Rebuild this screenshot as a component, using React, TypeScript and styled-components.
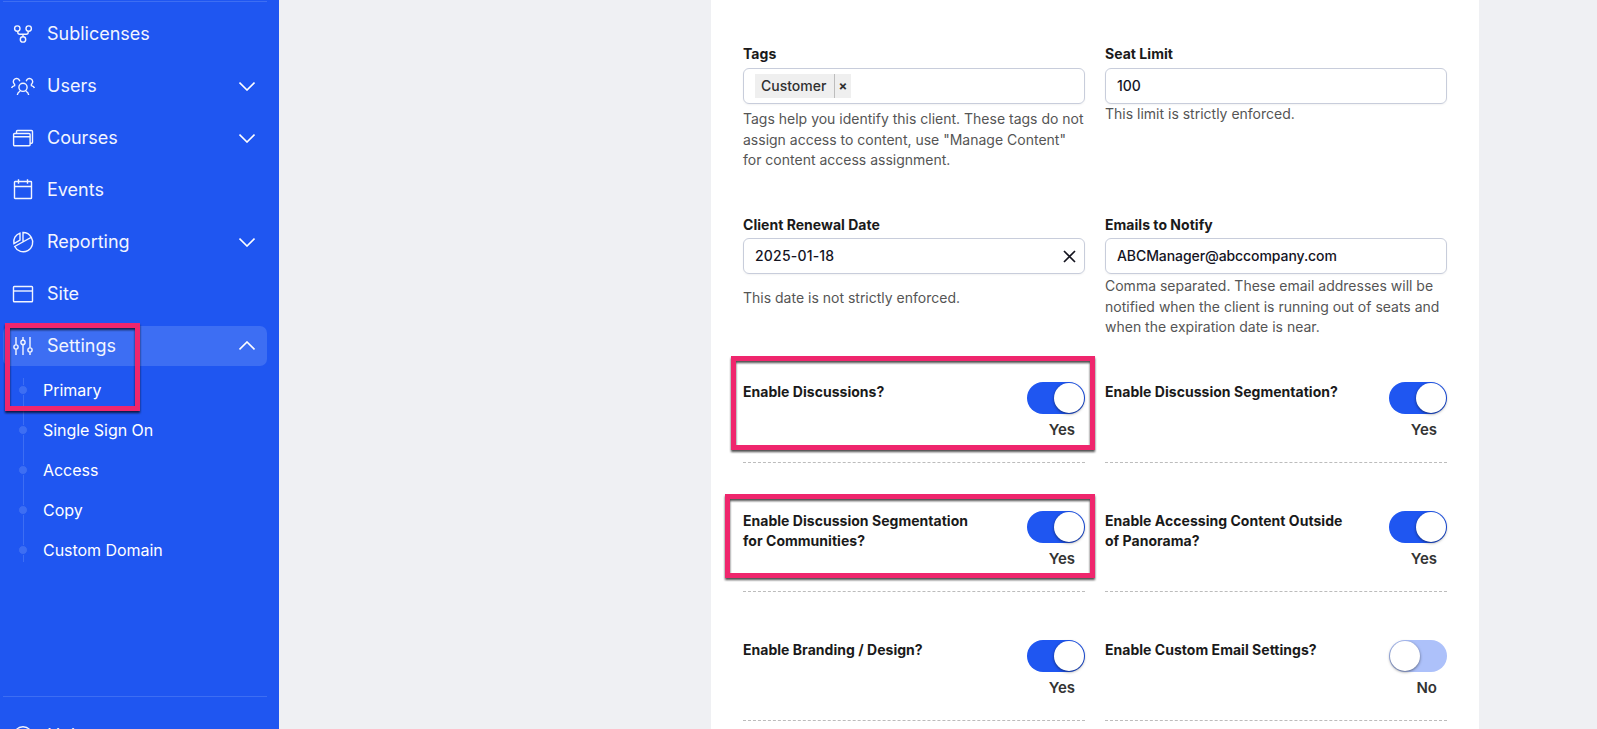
import * as React from 'react';
import styled, {createGlobalStyle, ThemeProvider} from 'styled-components';

const theme = {
  colors: {
    primary: '#1f56f1',
    primaryLight: '#3d6ef3',
    primaryOff: '#adc1fa',
    page: '#eff0f3',
    border: '#c8cddb',
    text: '#1a1a1a',
    help: '#555555',
    highlight: '#ef266d',
  },
};

const GlobalStyle = createGlobalStyle`
  * {
    box-sizing: border-box;
  }

  body {
    margin: 0;
    overflow: hidden;
    font-family: Inter, "Liberation Sans", sans-serif;
  }
`;

const Page = styled.div`
  display: flex;
  height: 729px;
  overflow: hidden;
  background: ${props => props.theme.colors.page};
`;

const Sidebar = styled.nav`
  width: 279px;
  flex: none;
  padding: 1px 12px 0 3px;
  overflow: hidden;
  background: ${props => props.theme.colors.primary};
`;

const Divider = styled.div`
  height: 1px;
  background: ${props => props.theme.colors.primaryLight};
`;

const NavList = styled.div`
  display: flex;
  flex-direction: column;
  gap: 12px;
  padding-top: 12px;
`;

const NavItem = styled.div<{$active?: boolean}>`
  position: relative;
  display: flex;
  align-items: center;
  height: 40px;
  padding: 0 12px 0 8px;
  border-radius: 7px;
  color: #f2f5ff;
  background: ${props => props.$active ? props.theme.colors.primaryLight : 'transparent'};
`;

const NavLabel = styled.span`
  flex: 1;
  margin-left: 12px;
  font-size: 18px;
  line-height: 24px;
`;

const Icon = styled.svg`
  flex: none;
  width: 24px;
  height: 24px;
  fill: none;
  stroke: currentColor;
  stroke-width: 1.4;
`;

const ChevronIcon = styled.svg<{$open?: boolean}>`
  width: 16px;
  height: 9px;
  margin-top: ${props => props.$open ? -1 : 1}px;
  fill: none;
  stroke: #ffffff;
  stroke-width: 1.6;
  transform: ${props => props.$open ? 'rotate(180deg)' : 'none'};
`;

const SubList = styled.div`
  position: relative;
  display: flex;
  flex-direction: column;
  margin: 4px 0 126px;
  color: #ffffff;

  &::before {
    content: '';
    position: absolute;
    top: 8px;
    bottom: 8px;
    left: 20px;
    width: 1px;
    background: ${props => props.theme.colors.primaryLight};
  }
`;

const SubItem = styled.div`
  display: flex;
  align-items: center;
  height: 40px;
  padding-left: 15px;
  font-size: 16px;
  letter-spacing: -0.04px;
`;

const Dot = styled.span`
  position: relative;
  width: 10px;
  height: 10px;
  margin-right: 15px;
  border: 1px solid ${props => props.theme.colors.primary};
  border-radius: 50%;
  background: ${props => props.theme.colors.primaryLight};
`;

const HelpItem = styled(NavItem)`
  margin-top: 19px;
`;

/* Annotation frame drawn over the area it calls out */
const Highlight = styled.div<{$top: number; $left: number; $width: number; $height: number}>`
  position: absolute;
  z-index: 1;
  top: ${props => props.$top}px;
  left: ${props => props.$left}px;
  width: ${props => props.$width}px;
  height: ${props => props.$height}px;
  border: 5px solid ${props => props.theme.colors.highlight};
  filter: drop-shadow(0 2.5px 0.8px rgba(0, 0, 0, 0.7));
  pointer-events: none;
`;

const Card = styled.main`
  width: 768px;
  flex: none;
  margin-left: 432px;
  padding: 44px 32px 0;
  background: #ffffff;
`;

const Row = styled.div<{$height: number}>`
  display: grid;
  grid-template-columns: 342px 342px;
  column-gap: 20px;
  align-items: start;
  height: ${props => props.$height}px;
`;

const Label = styled.div<{$gap?: number}>`
  margin-bottom: ${props => props.$gap ?? 0}px;
  font-size: 14px;
  font-weight: 700;
  line-height: 20px;
  letter-spacing: 0.03px;
  color: ${props => props.theme.colors.text};
`;

const Input = styled.div<{$spacing?: number}>`
  display: flex;
  align-items: center;
  justify-content: space-between;
  height: 36px;
  padding: 0 8px 2px 11px;
  border: 1px solid ${props => props.theme.colors.border};
  border-radius: 6px;
  box-shadow: 0 1px 2px rgba(0, 0, 0, 0.05);
  font-size: 14px;
  font-weight: 500;
  letter-spacing: ${props => props.$spacing ?? 0}px;
  color: #14141f;
`;

const Help = styled.p<{$gap: number}>`
  margin: ${props => props.$gap}px 0 0;
  font-size: 14px;
  line-height: 20.4px;
  color: ${props => props.theme.colors.help};
  white-space: nowrap;
`;

const Tag = styled.span`
  display: flex;
  align-items: center;
  height: 24px;
  margin-top: 2px;
  background: #efefef;
  color: #303030;
`;

const TagName = styled.span`
  padding: 0 8px 1px 6px;
`;

const TagRemove = styled.span`
  width: 17px;
  height: 24px;
  padding-right: 1px;
  border-left: 1px solid #bdbdbd;
  font-weight: 700;
  font-size: 13px;
  line-height: 25px;
  text-align: center;
`;

const CloseIcon = styled.svg`
  width: 13px;
  height: 13px;
  margin-top: 2px;
  stroke: #14141f;
  stroke-width: 1.7;
`;

const ToggleField = styled.div`
  position: relative;
  display: flex;
  justify-content: space-between;
  height: 81px;
  border-bottom: 1px dashed #bcbcbc;
`;

const Control = styled.div`
  display: flex;
  flex-direction: column;
  align-items: flex-end;
`;

const Track = styled.div<{$on: boolean}>`
  display: flex;
  justify-content: ${props => props.$on ? 'flex-end' : 'flex-start'};
  width: 58px;
  height: 32px;
  padding: 1px;
  border-radius: 16px;
  background: ${props => props.$on ? props.theme.colors.primary : props.theme.colors.primaryOff};
`;

const Knob = styled.span`
  width: 30px;
  height: 30px;
  border-radius: 50%;
  background: #ffffff;
  box-shadow: 0 1px 3px rgba(0, 0, 0, 0.5);
`;

const State = styled.span`
  margin: 6px 10px 0 0;
  font-size: 15px;
  font-weight: 600;
  line-height: 20px;
  color: #333333;
`;

const icons = {
  sublicenses: <>
    <circle cx="6.3" cy="6.6" r="2.7"/>
    <circle cx="17.7" cy="6.6" r="2.7"/>
    <circle cx="12" cy="17.4" r="2.7"/>
    <path d="M6.8 9.3v1a2 2 0 0 0 2 2h6.4a2 2 0 0 0 2-2v-1M12 12.3v2.4"/>
  </>,
  users: <>
    <circle cx="12" cy="13.3" r="4.1"/>
    <path d="M6.3 21c.3-1.9 1.3-3.2 2.9-3.9M17.7 21c-.3-1.9-1.3-3.2-2.9-3.9"/>
    <path d="M8.800 7.200C7.900 4.600 5.600 3.900 3.800 5 2.200 6 2 8.100 2.900 9.400l.7.9v1.300C2 11.900 1 12.500.6 14"/>
    <path d="M15.200 7.200c.9-2.600 3.200-3.300 5-2.200 1.600 1 1.800 3.100.9 4.400l-.7.9v1.300c1.600.3 2.600.9 3 2.400"/>
  </>,
  courses: <>
    <rect x="2.600" y="7.500" width="16.500" height="12.300" rx="1"/>
    <path d="M2.600 10.700h16.500M5.500 7.500V5.500a1 1 0 0 1 1-1h14a1 1 0 0 1 1 1v10.800a1 1 0 0 1-1 1h-1.400"/>
  </>,
  events: <>
    <rect x="3.500" y="3.500" width="17" height="17" rx=".6"/>
    <path d="M3.500 8.500h17M7.500 1.300v4.400M16.500 1.300v4.400"/>
  </>,
  reporting: <>
    <path d="M9 3.200v7L2.900 13.700C2 9 4.600 4.600 9 3.200z"/>
    <path d="M12 12V2.500a9.500 9.500 0 0 1 8.300 4.800L3.700 16.500A9.500 9.500 0 1 0 20.300 7.300"/>
  </>,
  site: <>
    <rect x="2.500" y="4.500" width="19" height="15.200" rx=".8"/>
    <path d="M2.500 9h19"/>
  </>,
  settings: <>
    <path d="M5 3v7.800M5 15.200V21M12 3v3.200M12 10.600V21M19 3v10.800M19 18.200V21"/>
    <circle cx="5" cy="13" r="2.100"/>
    <circle cx="12" cy="8.400" r="2.100"/>
    <circle cx="19" cy="16" r="2.100"/>
  </>,
  help: <>
    <circle cx="12" cy="12" r="9.300"/>
    <path d="M9.500 10a2.500 2.500 0 1 1 3.500 2.300c-.7.300-1 .8-1 1.500M12 16v1"/>
  </>,
};

interface INavEntry {
  icon: keyof typeof icons;
  label: string;
  expandable?: boolean;
  active?: boolean;
}

const navEntries: INavEntry[] = [
  {icon: 'sublicenses', label: 'Sublicenses'},
  {icon: 'users', label: 'Users', expandable: true},
  {icon: 'courses', label: 'Courses', expandable: true},
  {icon: 'events', label: 'Events'},
  {icon: 'reporting', label: 'Reporting', expandable: true},
  {icon: 'site', label: 'Site'},
  {icon: 'settings', label: 'Settings', expandable: true, active: true},
];

const settingsEntries = ['Primary', 'Single Sign On', 'Access', 'Copy', 'Custom Domain'];

const Chevron: React.FC<{open?: boolean}> = props => {
  return <ChevronIcon viewBox="0 0 16 9" $open={props.open}>
    <path d="M.5.600 8 8l7.500-7.400"/>
  </ChevronIcon>
};

interface IToggle {
  label: React.ReactNode;
  on?: boolean;
  children?: React.ReactNode;
}

const Toggle: React.FC<IToggle> = props => {
  const on = !!props.on;
  return <ToggleField>
    <Label>{props.label}</Label>
    <Control>
      <Track $on={on}><Knob/></Track>
      <State>{on ? 'Yes' : 'No'}</State>
    </Control>
    {props.children}
  </ToggleField>
};

const Navigation: React.FC = () => {
  return <Sidebar>
    <Divider/>
    <NavList>
      {navEntries.map(entry => <NavItem key={entry.label} $active={entry.active}>
        <Icon viewBox="0 0 24 24">{icons[entry.icon]}</Icon>
        <NavLabel>{entry.label}</NavLabel>
        {entry.expandable && <Chevron open={entry.active}/>}
        {entry.active && <Highlight $top={-3} $left={2} $width={135} $height={88}/>}
      </NavItem>)}
    </NavList>
    <SubList>
      {settingsEntries.map(entry => <SubItem key={entry}><Dot/>{entry}</SubItem>)}
    </SubList>
    <Divider/>
    <HelpItem>
      <Icon viewBox="0 0 24 24">{icons.help}</Icon>
      <NavLabel>Help</NavLabel>
    </HelpItem>
  </Sidebar>
};

const App: React.FC = () => {
  return <ThemeProvider theme={theme}>
    <GlobalStyle/>
    <Page>
      <Navigation/>
      <Card>
        <Row $height={171}>
          <div>
            <Label $gap={4}>Tags</Label>
            <Input>
              <Tag>
                <TagName>Customer</TagName>
                <TagRemove>×</TagRemove>
              </Tag>
            </Input>
            <Help $gap={5.4}>
              Tags help you identify this client. These tags do not<br/>
              assign access to content, use "Manage Content"<br/>
              for content access assignment.
            </Help>
          </div>
          <div>
            <Label $gap={4}>Seat Limit</Label>
            <Input>100</Input>
            <Help $gap={0}>This limit is strictly enforced.</Help>
          </div>
        </Row>
        <Row $height={167}>
          <div>
            <Label $gap={3}>Client Renewal Date</Label>
            <Input $spacing={0.2}>
              2025-01-18
              <CloseIcon viewBox="0 0 13 13"><path d="M1 1l11 11M12 1L1 12"/></CloseIcon>
            </Input>
            <Help $gap={14}>This date is not strictly enforced.</Help>
          </div>
          <div>
            <Label $gap={3}>Emails to Notify</Label>
            <Input $spacing={-0.08}>ABCManager@abccompany.com</Input>
            <Help $gap={2.4}>
              Comma separated. These email addresses will be<br/>
              notified when the client is running out of seats and<br/>
              when the expiration date is near.
            </Help>
          </div>
        </Row>
        <Row $height={129}>
          <Toggle on label="Enable Discussions?">
            <Highlight $top={-26} $left={-12} $width={364} $height={94}/>
          </Toggle>
          <Toggle on label="Enable Discussion Segmentation?"/>
        </Row>
        <Row $height={129}>
          <Toggle on label={<>Enable Discussion Segmentation<br/>for Communities?</>}>
            <Highlight $top={-17} $left={-18} $width={370} $height={84}/>
          </Toggle>
          <Toggle on label={<>Enable Accessing Content Outside<br/>of Panorama?</>}/>
        </Row>
        <Row $height={129}>
          <Toggle on label="Enable Branding / Design?"/>
          <Toggle label="Enable Custom Email Settings?"/>
        </Row>
      </Card>
    </Page>
  </ThemeProvider>
};

export default App;
